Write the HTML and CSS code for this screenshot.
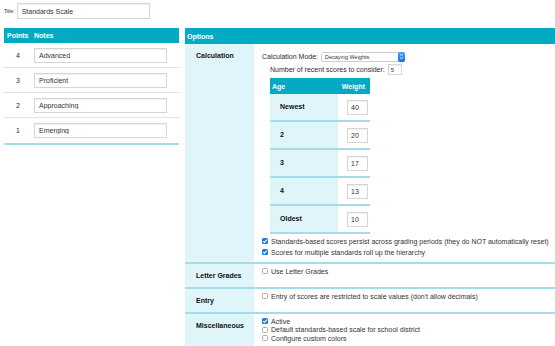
FILE: index.html
```html
<!DOCTYPE html>
<html lang="en">
<head>
  <meta charset="UTF-8" />
  <title>Standards Scale</title>
  <link rel="stylesheet" href="styles.css">
</head>
<body>
  <div class="title-row">
    <label>Title:</label>
    <input class="text-input title-input" value="Standards Scale">
  </div>

  <div class="layout">
    <!-- Scale points -->
    <div class="scale">
      <div class="scale-head">
        <div class="pts-col">Points</div>
        <div>Notes</div>
      </div>
      <div class="scale-row">
        <div class="pts-col">4</div>
        <input class="text-input note-input" value="Advanced">
      </div>
      <div class="scale-row">
        <div class="pts-col">3</div>
        <input class="text-input note-input" value="Proficient">
      </div>
      <div class="scale-row">
        <div class="pts-col">2</div>
        <input class="text-input note-input" value="Approaching">
      </div>
      <div class="scale-row last">
        <div class="pts-col">1</div>
        <input class="text-input note-input" value="Emerging">
      </div>
    </div>

    <!-- Options -->
    <div class="options">
      <div class="options-head">Options</div>

      <div class="section">
        <div class="section-label">Calculation</div>
        <div class="section-body calc-body">
          <div class="mode-row">
            <span>Calculation Mode:</span>
            <div class="select">
              <span>Decaying Weights</span>
              <span class="select-btn">
                <svg width="5" height="7" viewBox="0 0 5 7"><path d="M1 2.6 L2.5 1.2 L4 2.6 M1 4.4 L2.5 5.8 L4 4.4" fill="none" stroke="#fff" stroke-width="0.9"/></svg>
              </span>
            </div>
          </div>
          <div class="count-row">
            <span>Number of recent scores to consider:</span>
            <input class="text-input count-input" value="5">
          </div>

          <div class="weights">
            <div class="weights-head">
              <div>Age</div>
              <div>Weight</div>
            </div>
            <div class="weights-row">
              <div class="age-cell">Newest</div>
              <div class="weight-cell"><input class="text-input weight-input" value="40"></div>
            </div>
            <div class="weights-row">
              <div class="age-cell">2</div>
              <div class="weight-cell"><input class="text-input weight-input" value="20"></div>
            </div>
            <div class="weights-row">
              <div class="age-cell">3</div>
              <div class="weight-cell"><input class="text-input weight-input" value="17"></div>
            </div>
            <div class="weights-row">
              <div class="age-cell">4</div>
              <div class="weight-cell"><input class="text-input weight-input" value="13"></div>
            </div>
            <div class="weights-row">
              <div class="age-cell">Oldest</div>
              <div class="weight-cell"><input class="text-input weight-input" value="10"></div>
            </div>
          </div>

          <div class="check-line first"><span class="cb on"><svg width="6" height="6" viewBox="0 0 6 6"><path d="M1.2 3.1 L2.5 4.4 L4.9 1.6" fill="none" stroke="#fff" stroke-width="1.1"/></svg></span>Standards-based scores persist across grading periods (they do NOT automatically reset)</div>
          <div class="check-line"><span class="cb on"><svg width="6" height="6" viewBox="0 0 6 6"><path d="M1.2 3.1 L2.5 4.4 L4.9 1.6" fill="none" stroke="#fff" stroke-width="1.1"/></svg></span>Scores for multiple standards roll up the hierarchy</div>
        </div>
      </div>

      <div class="section">
        <div class="section-label">Letter Grades</div>
        <div class="section-body">
          <div class="check-line"><span class="cb"></span>Use Letter Grades</div>
        </div>
      </div>

      <div class="section">
        <div class="section-label">Entry</div>
        <div class="section-body">
          <div class="check-line"><span class="cb"></span>Entry of scores are restricted to scale values (don't allow decimals)</div>
        </div>
      </div>

      <div class="section misc">
        <div class="section-label">Miscellaneous</div>
        <div class="section-body">
          <div class="check-line"><span class="cb on"><svg width="6" height="6" viewBox="0 0 6 6"><path d="M1.2 3.1 L2.5 4.4 L4.9 1.6" fill="none" stroke="#fff" stroke-width="1.1"/></svg></span>Active</div>
          <div class="check-line tight"><span class="cb"></span>Default standards-based scale for school district</div>
          <div class="check-line tight"><span class="cb"></span>Configure custom colors</div>
        </div>
      </div>
    </div>
  </div>
</body>
</html>
```

FILE: styles.css
```css
:root {
  --teal: #03aac4;
  --light: #e0f5f9;
  --rule: #a3dde7;
  --text: #2b2b2b;
}

* {
  box-sizing: border-box;
}

body {
  margin: 0;
  padding: 3px 0 0 4px;
  font-family: "Liberation Sans", Arial, sans-serif;
  font-size: 7px;
  color: var(--text);
  background: #fff;
  overflow: hidden;
}

.text-input {
  font-family: "Liberation Sans", Arial, sans-serif;
  font-size: 7px;
  color: #333;
  border: 1px solid #d5d5d5;
  box-shadow: inset 0 1px 1px rgba(0,0,0,0.06);
  background: #fff;
  padding: 0 4px;
  margin: 0;
  outline: none;
}

/* Title */
.title-row {
  display: flex;
  align-items: center;
  gap: 2px;
  height: 16px;
}

.title-row label {
  font-size: 5px;
}

.title-input {
  width: 133px;
  height: 16px;
}

.layout {
  display: flex;
  gap: 6px;
  margin-top: 9px;
  align-items: flex-start;
}

/* Scale table */
.scale {
  width: 175px;
  flex-shrink: 0;
}

.scale-head {
  display: flex;
  align-items: center;
  height: 15px;
  background: var(--teal);
  color: #fff;
  font-weight: bold;
}

.scale-head .pts-col {
  width: 30px;
  padding-left: 3px;
}

.scale-row {
  display: flex;
  align-items: center;
  height: 25px;
  border-bottom: 1px solid #e3e3e3;
}

.scale-row.last {
  height: 27px;
  border-bottom: 2px solid var(--rule);
}

.scale-row .pts-col {
  width: 30px;
  padding-right: 2px;
  text-align: center;
}

.note-input {
  width: 133px;
  height: 15px;
}

/* Options */
.options {
  flex: 1;
  min-width: 0;
}

.options-head {
  display: flex;
  align-items: center;
  height: 16px;
  padding-left: 2px;
  background: var(--teal);
  color: #fff;
  font-weight: bold;
}

.section {
  display: flex;
  min-height: 25px;
  border-bottom: 2px solid var(--rule);
}

.section.misc {
  border-bottom: none;
  min-height: 40px;
}

.section-label {
  width: 69px;
  flex-shrink: 0;
  padding: 8px 0 0 11px;
  line-height: 8px;
  background: var(--light);
  font-weight: bold;
  color: #111;
}

.section-body {
  flex: 1;
  min-width: 0;
  padding: 3px 8px 2px;
}

.calc-body {
  padding-bottom: 5px;
}

.mode-row {
  display: flex;
  align-items: center;
  gap: 3px;
  height: 11px;
  margin-top: 4px;
}

.select {
  display: flex;
  align-items: center;
  justify-content: space-between;
  width: 84px;
  height: 10px;
  padding-left: 3px;
  border: 1px solid #cfcfcf;
  border-radius: 2px;
  font-size: 5.5px;
  color: #333;
  background: #fff;
}

.select-btn {
  display: flex;
  align-items: center;
  justify-content: center;
  width: 7px;
  height: 10px;
  margin-right: -1px;
  border-radius: 2px;
  background: linear-gradient(#4a9cf5, #1c6fe0);
}

.count-row {
  display: flex;
  align-items: center;
  gap: 3px;
  height: 11px;
  margin-top: 2px;
  padding-left: 8px;
}

.count-input {
  width: 14px;
  height: 11px;
  padding: 0 2px;
  font-size: 6px;
}

/* Weights table */
.weights {
  width: 100px;
  margin: 3px 0 0 8px;
}

.weights-head {
  display: flex;
  justify-content: space-between;
  align-items: center;
  height: 16px;
  padding: 0 5px 0 2px;
  background: var(--teal);
  color: #fff;
  font-weight: bold;
}

.weights-row {
  display: flex;
  height: 28px;
  border-bottom: 2px solid var(--rule);
}

.age-cell {
  width: 68px;
  display: flex;
  align-items: center;
  padding: 0 0 1px 10px;
  background: var(--light);
  font-weight: bold;
  color: #111;
}

.weight-cell {
  flex: 1;
  display: flex;
  align-items: center;
  padding-left: 9px;
}

.weight-input {
  width: 21px;
  height: 15px;
  padding: 0 3px;
}

/* Checkboxes */
.check-line {
  display: flex;
  align-items: center;
  gap: 3px;
  height: 9px;
  font-size: 7px;
  white-space: nowrap;
  color: #333;
}

.calc-body .check-line {
  margin-top: 2px;
}

.calc-body .check-line.first {
  margin-top: 2.5px;
}

.check-line.tight {
  height: 8.5px;
}

.cb {
  display: flex;
  align-items: center;
  justify-content: center;
  width: 6px;
  height: 6px;
  border: 1px solid #a9a9a9;
  border-radius: 1.5px;
  background: #fff;
  flex-shrink: 0;
}

.cb.on {
  border: none;
  background: #1f78de;
}
```
